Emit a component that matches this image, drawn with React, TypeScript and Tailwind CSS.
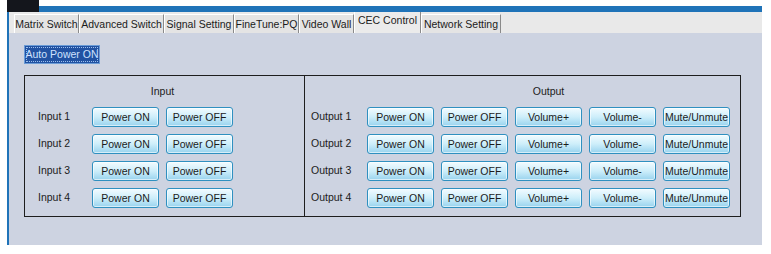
import React from "react";

const font = { fontFamily: '"Liberation Sans", Arial, sans-serif' };

const tabs: { label: string; w: string; active?: boolean }[] = [
  { label: "Matrix Switch", w: "w-[65px]" },
  { label: "Advanced Switch", w: "w-[85px]" },
  { label: "Signal Setting", w: "w-[70px]" },
  { label: "FineTune:PQ", w: "w-[65px]" },
  { label: "Video Wall", w: "w-[55px]" },
  { label: "CEC Control", w: "w-[67px]", active: true },
  { label: "Network Setting", w: "w-[80px]" },
];

function Btn({ children }: { children: React.ReactNode }) {
  return (
    <div className="w-[67px] h-[20px] flex items-center justify-center rounded-[3px] border border-[#2f90c0] bg-gradient-to-b from-[#f2fbff] via-[#cdeefa] to-[#98d3ee] shadow-[inset_0_0_0_1px_rgba(255,255,255,0.6)] text-[10.5px] text-[#1b1b1b] leading-none">
      {children}
    </div>
  );
}

export default function App() {
  const rows = [1, 2, 3, 4];
  return (
    <div className="w-[771px] h-[254px] bg-white overflow-hidden" style={font}>
      <div className="flex ml-[7px] w-[755px] h-[12px]">
        <div className="w-[32px] h-[12px] bg-[#14161c]" />
        <div className="flex-1 flex flex-col">
          <div className="h-[6px] bg-white" />
          <div className="h-[6px] bg-[#1f73b8]" />
        </div>
      </div>
      <div className="ml-[7px] w-[755px] h-[233px] border-l-2 border-[#1f73b8] flex flex-col">
        <div className="h-[21px] bg-[#e9e9e9] flex items-end pl-[5px]">
          {tabs.map((t) =>
            t.active ? (
              <div
                key={t.label}
                className={`${t.w} h-[21px] bg-[#ebebeb] border-l border-r border-l-white border-r-[#8a8a8a] flex justify-center pt-[2px] text-[10.5px] text-[#1b1b1b] leading-[13px]`}
              >
                {t.label}
              </div>
            ) : (
              <div
                key={t.label}
                className={`${t.w} h-[19px] bg-[#e4e4e4] border-l border-r border-t border-l-white border-t-white border-r-[#8a8a8a] flex items-center justify-center text-[10.5px] text-[#1b1b1b] leading-none`}
              >
                {t.label}
              </div>
            )
          )}
        </div>
        <div className="flex-1 bg-[#cdd3e1] pl-[15px] pt-[12px]">
          <div className="w-[76px] h-[19px] bg-[#2152a2] border border-[#6a9bd6] outline-1 outline-dotted outline-offset-[-3px] outline-[#9cc0ee] flex items-center justify-center text-[10.5px] text-[#cfe2ff] leading-none">
            Auto Power ON
          </div>
          <div className="mt-[11px] w-[717px] h-[142px] border border-[#1e1e1e] flex">
            <div className="w-[280px] border-r border-[#1e1e1e] pl-[13px]">
              <div className="grid grid-cols-[54px_141px]">
                <div />
                <div className="h-[31px] flex items-center justify-center text-[10.5px] text-[#1b1b1b]">
                  Input
                </div>
              </div>
              <div className="flex flex-col gap-[7px]">
                {rows.map((r) => (
                  <div key={r} className="flex items-center h-[20px]">
                    <div className="w-[54px] text-[10.5px] text-[#1b1b1b]">Input {r}</div>
                    <div className="flex gap-[7px]">
                      <Btn>Power ON</Btn>
                      <Btn>Power OFF</Btn>
                    </div>
                  </div>
                ))}
              </div>
            </div>
            <div className="flex-1 pl-[6px]">
              <div className="grid grid-cols-[56px_363px]">
                <div />
                <div className="h-[31px] flex items-center justify-center text-[10.5px] text-[#1b1b1b]">
                  Output
                </div>
              </div>
              <div className="flex flex-col gap-[7px]">
                {rows.map((r) => (
                  <div key={r} className="flex items-center h-[20px]">
                    <div className="w-[56px] text-[10.5px] text-[#1b1b1b]">Output {r}</div>
                    <div className="flex gap-[7px]">
                      <Btn>Power ON</Btn>
                      <Btn>Power OFF</Btn>
                      <Btn>Volume+</Btn>
                      <Btn>Volume-</Btn>
                      <Btn>Mute/Unmute</Btn>
                    </div>
                  </div>
                ))}
              </div>
            </div>
          </div>
        </div>
      </div>
    </div>
  );
}
